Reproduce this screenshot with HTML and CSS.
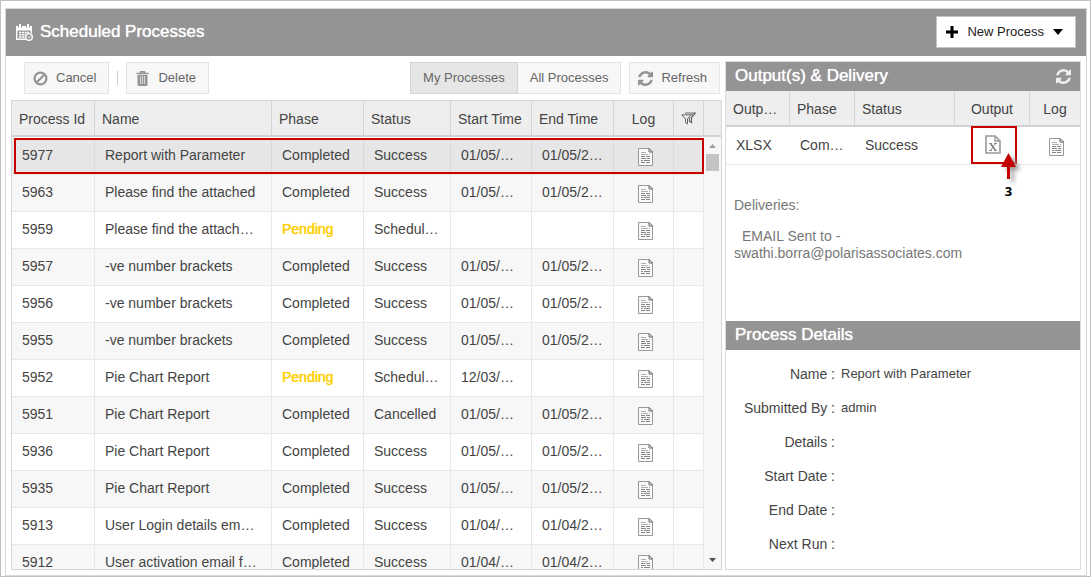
FILE: index.html
```html
<!DOCTYPE html>
<html lang="en">
<head>
<meta charset="utf-8">
<title>Scheduled Processes</title>
<link rel="stylesheet" href="styles.css">
</head>
<body>
<svg class="defs" aria-hidden="true">
  <symbol id="i-log" viewBox="0 0 15 18">
    <path d="M.5.500h10.500l3.500 3.500v13.500H.5z" fill="#fafafa" stroke="#999"/>
    <path d="M11 .5v3.500h3.500z" fill="#fff" stroke="#666" stroke-linejoin="round"/>
    <path d="M3 4.500h5M3 6.500h7M11 6.500h1" stroke="#b0b0b0"/>
    <path d="M3 8.500h4M8 8.500h4M3 10.500h5M9 10.500h3M3 12.500h2M6 12.500h6M3 14.500h4M8 14.500h4" stroke="#858585"/>
  </symbol>
  <symbol id="i-refresh" viewBox="0 0 1536 1536">
    <path d="M1511 928q0 5-1 7-64 268-268 434.500T764 1536q-146 0-282.500-55T238 1324l-129 129q-19 19-45 19t-45-19-19-45V960q0-26 19-45t45-19h448q26 0 45 19t19 45-19 45l-137 137q71 66 161 102t187 36q134 0 250-65t186-179q11-17 53-117 8-23 30-23h192q13 0 22.500 9.500t9.500 22.500zm25-800v448q0 26-19 45t-45 19h-448q-26 0-45-19t-19-45 19-45l138-138Q969 256 768 256q-134 0-250 65T332 500q-11 17-53 117-8 23-30 23H50q-13 0-22.500-9.500T18 608v-7q65-268 270-434.500T768 0q146 0 284 55.500T1297 212l130-129q19-19 45-19t45 19 19 45z" fill="currentColor"/>
  </symbol>
</svg>
<div class="frame">
  <main class="window">
    <header class="titlebar">
      <svg class="title-icon" viewBox="0 0 17 17" aria-hidden="true">
        <path d="M.7 3v12.300H10M15.300 3v6" fill="none" stroke="#fff" stroke-width="1.400"/>
        <path d="M0 2h16v4.500H0z" fill="#fff"/>
        <path d="M4 0v4M12 0v4" stroke="#949494" stroke-width="3.400"/>
        <path d="M4 0v4M12 0v4" stroke="#fff" stroke-width="2"/>
        <path d="M3 8.500h10M3 10.700h7M3 12.900h6" stroke="#fff" stroke-width="1.500" stroke-dasharray="2.200 .6"/>
        <circle cx="13" cy="12.900" r="3.300" fill="#949494" stroke="#fff" stroke-width="1.400"/>
        <path d="M11.800 12.500l1.200 1.200 2-2.200" fill="none" stroke="#fff"/>
      </svg>
      <h1 class="heading">Scheduled Processes</h1>
      <button class="new-process" type="button">
        <svg class="plus" viewBox="0 0 12 12" aria-hidden="true"><path d="M6 0v12M0 6h12" stroke="#000" stroke-width="3"/></svg>
        New Process
        <svg class="caret" viewBox="0 0 10 6" aria-hidden="true"><path d="M0 0h10L5 6z"/></svg>
      </button>
    </header>
    <div class="content">
      <section class="processes">
        <div class="toolbar">
          <button class="btn" type="button">
            <svg class="btn-icon" viewBox="0 0 15 15" aria-hidden="true"><g fill="none" stroke="#949494" stroke-width="2.200"><circle cx="7.500" cy="7.500" r="5.900"/><path d="M3.500 11.500l8-8"/></g></svg>
            Cancel
          </button>
          <span class="separator"></span>
          <button class="btn" type="button">
            <svg class="btn-icon" viewBox="0 0 15 15" aria-hidden="true"><path d="M5.500 2V.8h4V2M1.500 2.500h12" fill="none" stroke="#949494" stroke-width="1.500"/><path d="M2.500 4h10v9.500q0 1.500-1.500 1.500H4q-1.500 0-1.500-1.500z" fill="#949494"/><path d="M5.500 5v8M7.500 5v8M9.500 5v8" stroke="#d8d8d8"/></svg>
            Delete
          </button>
          <div class="toggle">
            <button class="btn btn-on" type="button" aria-pressed="true">My Processes</button>
            <button class="btn btn-off" type="button" aria-pressed="false">All Processes</button>
          </div>
          <button class="btn" type="button">
            <svg class="btn-icon" aria-hidden="true"><use href="#i-refresh"/></svg>
            Refresh
          </button>
        </div>
        <div class="grid">
          <table class="table grid-head">
            <colgroup><col class="c-id"><col><col class="c-phase"><col class="c-status"><col class="c-start"><col class="c-end"><col class="c-log"><col class="c-filter"><col class="c-scroll"></colgroup>
            <thead><tr>
              <th>Process Id</th><th>Name</th><th>Phase</th><th>Status</th><th>Start Time</th><th>End Time</th><th class="center">Log</th>
              <th class="center tight"><svg class="filter" viewBox="0 0 15 13" aria-label="Filter"><g fill="none" stroke="#666"><path d="M4 1h10.500L10.500 5.500v5L8 8.500" stroke-width="1.200"/><path d="M.8 2.800h9.400L6.500 7v5L4.500 10.500V7z"/><path d="M10.200 2.800h2.500M8.500 5.500v4"/></g></svg></th>
              <th></th>
            </tr></thead>
          </table>
          <div class="grid-body">
            <div class="rows">
              <table class="table striped">
                <colgroup><col class="c-id"><col><col class="c-phase"><col class="c-status"><col class="c-start"><col class="c-end"><col class="c-log"><col class="c-filter"></colgroup>
                <tbody>
                  <tr class="selected"><td>5977</td><td>Report with Parameter</td><td>Completed</td><td>Success</td><td>01/05/2017</td><td>01/05/2017</td><td class="center"><svg class="log"><use href="#i-log"/></svg></td><td></td></tr>
                  <tr><td>5963</td><td>Please find the attached</td><td>Completed</td><td>Success</td><td>01/05/2017</td><td>01/05/2017</td><td class="center"><svg class="log"><use href="#i-log"/></svg></td><td></td></tr>
                  <tr><td>5959</td><td>Please find the attached file</td><td class="pending">Pending</td><td>Scheduled</td><td></td><td></td><td class="center"><svg class="log"><use href="#i-log"/></svg></td><td></td></tr>
                  <tr><td>5957</td><td>-ve number brackets</td><td>Completed</td><td>Success</td><td>01/05/2017</td><td>01/05/2017</td><td class="center"><svg class="log"><use href="#i-log"/></svg></td><td></td></tr>
                  <tr><td>5956</td><td>-ve number brackets</td><td>Completed</td><td>Success</td><td>01/05/2017</td><td>01/05/2017</td><td class="center"><svg class="log"><use href="#i-log"/></svg></td><td></td></tr>
                  <tr><td>5955</td><td>-ve number brackets</td><td>Completed</td><td>Success</td><td>01/05/2017</td><td>01/05/2017</td><td class="center"><svg class="log"><use href="#i-log"/></svg></td><td></td></tr>
                  <tr><td>5952</td><td>Pie Chart Report</td><td class="pending">Pending</td><td>Scheduled</td><td>12/03/2017</td><td></td><td class="center"><svg class="log"><use href="#i-log"/></svg></td><td></td></tr>
                  <tr><td>5951</td><td>Pie Chart Report</td><td>Completed</td><td>Cancelled</td><td>01/05/2017</td><td>01/05/2017</td><td class="center"><svg class="log"><use href="#i-log"/></svg></td><td></td></tr>
                  <tr><td>5936</td><td>Pie Chart Report</td><td>Completed</td><td>Success</td><td>01/05/2017</td><td>01/05/2017</td><td class="center"><svg class="log"><use href="#i-log"/></svg></td><td></td></tr>
                  <tr><td>5935</td><td>Pie Chart Report</td><td>Completed</td><td>Success</td><td>01/05/2017</td><td>01/05/2017</td><td class="center"><svg class="log"><use href="#i-log"/></svg></td><td></td></tr>
                  <tr><td>5913</td><td>User Login details email report</td><td>Completed</td><td>Success</td><td>01/04/2017</td><td>01/04/2017</td><td class="center"><svg class="log"><use href="#i-log"/></svg></td><td></td></tr>
                  <tr><td>5912</td><td>User activation email for users</td><td>Completed</td><td>Success</td><td>01/04/2017</td><td>01/04/2017</td><td class="center"><svg class="log"><use href="#i-log"/></svg></td><td></td></tr>
                </tbody>
              </table>
              <div class="row-marker"></div>
            </div>
            <div class="scrollbar">
              <svg class="arrow" viewBox="0 0 7 4" aria-hidden="true"><path d="M0 4h7L3.500 0z" fill="#a0a0a0"/></svg>
              <div class="thumb"></div>
              <svg class="arrow arrow-down" viewBox="0 0 7 4" aria-hidden="true"><path d="M0 0h7L3.500 4z" fill="#505050"/></svg>
            </div>
          </div>
        </div>
      </section>
      <aside class="side">
        <div class="bar">
          <h2 class="heading">Output(s) &amp; Delivery</h2>
          <button class="bar-refresh" type="button" aria-label="Refresh outputs"><svg class="btn-icon" aria-hidden="true"><use href="#i-refresh"/></svg></button>
        </div>
        <table class="table outputs">
          <colgroup><col class="o-type"><col class="o-phase"><col><col class="o-output"><col class="o-log"></colgroup>
          <thead><tr><th>Output Type</th><th>Phase</th><th>Status</th><th class="center">Output</th><th class="center">Log</th></tr></thead>
          <tbody><tr>
            <td>XLSX</td><td>Completed</td><td>Success</td>
            <td class="center output-cell">
              <svg class="xls" viewBox="0 0 16 19" aria-label="Excel file"><path d="M1 1h9l5 5v12H1z" fill="#fff" stroke="#999" stroke-width="1.600"/><path d="M10 1v5h5" fill="none" stroke="#999" stroke-width="1.400"/><path d="M5.500 8.500l5 7" stroke="#888" stroke-width="1.800"/><path d="M10.500 8.500l-5 7M4 8.500h3M9 8.500h3M4 15.500h3M9 15.500h3" stroke="#888"/></svg>
              <div class="callout"></div>
              <div class="pointer">
                <svg class="pointer-arrow" viewBox="0 0 24 30" aria-hidden="true"><path d="M7.500 0L15 14H9v12H6V14H0z" fill="#c40000"/></svg>
                <span>3</span>
              </div>
            </td>
            <td class="center"><svg class="log"><use href="#i-log"/></svg></td>
          </tr></tbody>
        </table>
        <div class="deliveries">
          <p class="label">Deliveries:</p>
          <p class="delivery"><span class="via">EMAIL Sent to -</span><br>swathi.borra@polarisassociates.com</p>
        </div>
        <div class="bar"><h2 class="heading">Process Details</h2></div>
        <dl class="details">
          <dt>Name :</dt><dd>Report with Parameter</dd>
          <dt>Submitted By :</dt><dd>admin</dd>
          <dt>Details :</dt><dd></dd>
          <dt>Start Date :</dt><dd></dd>
          <dt>End Date :</dt><dd></dd>
          <dt>Next Run :</dt><dd></dd>
        </dl>
      </aside>
    </div>
  </main>
</div>
</body>
</html>
```

FILE: styles.css
```css
* { box-sizing: border-box; }

body {
  margin: 0;
  font: 14px/16px "Liberation Sans", Arial, sans-serif;
  color: #444;
  background: #fff;
}

h1, h2, p, dl, dd { margin: 0; }
svg { display: block; }
.defs { display: none; }

.frame {
  display: flex;
  height: 100vh;
  padding: 7px 3px 0 4px;
  border: 1px solid #c0c0c0;
}

.window {
  flex: 1;
  min-width: 0;
  display: flex;
  flex-direction: column;
  border: 1px solid #d8d8d8;
}

/* Title bar */
.titlebar {
  display: flex;
  align-items: center;
  gap: 7px;
  padding: 7px 10px 8px;
  background: #949494;
}
.title-icon { width: 17px; height: 17px; }
.heading {
  font-size: 17px;
  line-height: 20px;
  font-weight: normal;
  color: #fff;
  text-shadow: 0 0 1px #fff;
}
.new-process {
  display: flex;
  align-items: center;
  gap: 9px;
  height: 32px;
  margin-left: auto;
  padding: 0 12px 0 9px;
  border: 1px solid #c4c4c4;
  background: #fff;
  color: #222;
  font: 13px/16px "Liberation Sans", Arial, sans-serif;
}
.plus { width: 12px; height: 12px; }
.caret { width: 10px; height: 6px; }

.content {
  flex: 1;
  min-height: 0;
  display: flex;
  gap: 3px;
  padding: 0 5px 5px;
}

/* Process list */
.processes {
  flex: 1;
  min-width: 0;
  display: flex;
  flex-direction: column;
}
.toolbar {
  display: flex;
  align-items: center;
  gap: 8px;
  padding: 6px 2px 6px 13px;
}
.btn {
  display: flex;
  align-items: center;
  gap: 8px;
  height: 32px;
  padding: 0 12px 0 8px;
  border: 1px solid #e4e4e4;
  background: #f7f7f7;
  color: #666;
  font: 13px/16px "Liberation Sans", Arial, sans-serif;
  white-space: nowrap;
}
.btn-icon { width: 15px; height: 15px; color: #949494; }
.separator { width: 1px; height: 14px; background: #ccc; }
.toggle { display: flex; margin-left: auto; }
.toggle .btn { padding: 0 12px; }
.toggle .btn-on { background: #e6e6e6; border-color: #d4d4d4; }
.toggle .btn-off { border-left: 0; }

.grid {
  flex: 1;
  min-height: 0;
  display: flex;
  flex-direction: column;
  border: 1px solid #d6d6d6;
}
.grid-body {
  flex: 1;
  min-height: 0;
  display: flex;
  overflow: hidden;
}
.rows {
  position: relative;
  flex: 1;
  min-width: 0;
  padding-top: 1px;
}

.table {
  width: 100%;
  table-layout: fixed;
  border-collapse: separate;
  border-spacing: 0;
}
.table th, .table td {
  overflow: hidden;
  text-overflow: ellipsis;
  white-space: nowrap;
  text-align: left;
}
.table th {
  height: 36px;
  padding: 2px 7px 0;
  border-right: 1px solid #d4d4d4;
  border-bottom: 2px solid #d2d2d2;
  background: #eee;
  font-weight: normal;
}
.table th:last-child { border-right: 0; }
.table td {
  height: 37px;
  padding: 0 10px 2px;
  border-right: 1px solid #e8e8e8;
  border-bottom: 1px solid #e8e8e8;
}
.table .center { text-align: center; }
.table th.tight { padding: 0 7px; }
.table td.center { padding: 2px 6px 0 10px; }
.table td.pending { color: #fc0; text-shadow: 0 0 1px #fc0; }
.striped tr:nth-child(even) { background: #f7f7f7; }
.striped .selected { background: #e6e6e6; }
.striped .selected td { border-right-color: #dadada; }

.c-id { width: 83px; }
.c-phase { width: 92px; }
.c-status { width: 87px; }
.c-start { width: 81px; }
.c-end { width: 82px; }
.c-log { width: 60px; }
.c-filter { width: 30px; }
.c-scroll { width: 17px; }

.log { width: 15px; height: 18px; margin: 0 auto; }
.filter { width: 15px; height: 13px; margin: 0 auto; }

.row-marker {
  position: absolute;
  top: 1px;
  left: 2px;
  right: 0;
  height: 36px;
  border: 2px solid #c40000;
}

.scrollbar {
  width: 17px;
  display: flex;
  flex-direction: column;
  align-items: center;
  padding: 7px 2px;
  background: #f7f7f7;
}
.arrow { width: 7px; height: 4px; }
.arrow-down { margin-top: auto; }
.thumb { width: 13px; height: 17px; margin-top: 6px; background: #c4c4c4; }

/* Side panel */
.side {
  width: 356px;
  margin-top: 5px;
  border: 1px solid #dcdcdc;
}
.bar {
  display: flex;
  align-items: center;
  justify-content: space-between;
  height: 29px;
  padding: 0 9px 2px;
  background: #949494;
}
.bar-refresh { padding: 2px 0 0; border: 0; background: none; }
.bar-refresh .btn-icon { color: #eee; }

.outputs td { border-right: 0; height: 38px; }
.outputs td.center { padding: 3px 6px 0 8px; }
.outputs td.output-cell {
  position: relative;
  overflow: visible;
  padding: 0 8px 2px;
}
.o-type { width: 64px; }
.o-phase { width: 65px; }
.o-output { width: 75px; }
.o-log { width: 50px; }
.xls { width: 16px; height: 19px; margin: 0 auto; }

.callout {
  position: absolute;
  top: -1px;
  left: 16px;
  width: 46px;
  height: 38px;
  border: 2px solid #c40000;
}
.pointer {
  position: absolute;
  top: 26px;
  left: 46px;
  font: bold 13px/16px "Open Sans", sans-serif;
  color: #000;
}
.pointer span { display: block; width: 15px; }
.pointer-arrow {
  width: 24px;
  height: 30px;
  filter: drop-shadow(4px 3px 2px #999);
}

.deliveries {
  min-height: 156px;
  padding: 32px 8px 0;
  color: #777;
}
.delivery { margin-top: 15px; line-height: 17px; }
.via { padding-left: 8px; }

.details {
  display: grid;
  grid-template-columns: 109px 1fr;
  column-gap: 6px;
  padding-top: 7px;
  line-height: 34px;
}
.details dt { text-align: right; }
.details dd { font-size: 13px; }
```
